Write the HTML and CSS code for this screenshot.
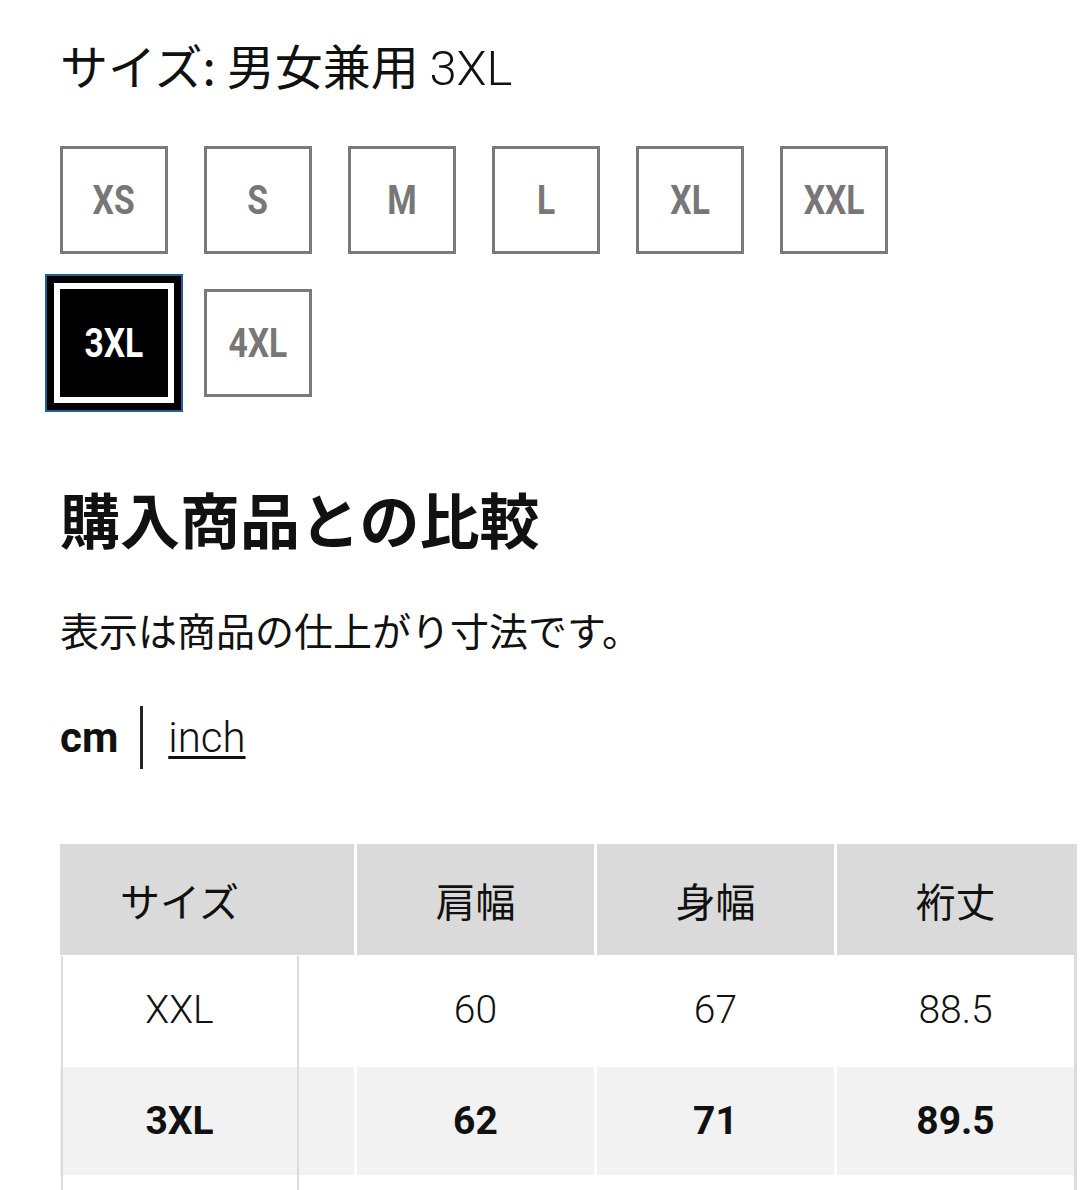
FILE: index.html
```html
<!DOCTYPE html>
<html lang="ja">
<head>
    <meta charset="UTF-8">
    <meta name="viewport" content="width=device-width, initial-scale=1.0">
    <title>サイズ選択</title>
    <link rel="stylesheet" href="styles.css">
</head>
<body>
    <main class="page">
        <h1 class="size-title">サイズ: 男女兼用 <span class="size-title-value">3XL</span></h1>

        <!-- サイズ選択ボタン -->
        <ul class="size-list">
            <li><button class="size-chip"><span>XS</span></button></li>
            <li><button class="size-chip"><span>S</span></button></li>
            <li><button class="size-chip"><span>M</span></button></li>
            <li><button class="size-chip"><span>L</span></button></li>
            <li><button class="size-chip"><span>XL</span></button></li>
            <li><button class="size-chip"><span>XXL</span></button></li>
            <li><button class="size-chip is-selected"><span>3XL</span></button></li>
            <li><button class="size-chip"><span>4XL</span></button></li>
        </ul>

        <h2 class="compare-title">購入商品との比較</h2>
        <p class="compare-note">表示は商品の仕上がり寸法です。</p>

        <div class="unit-switch">
            <span class="unit is-active">cm</span>
            <span class="unit-divider"></span>
            <a class="unit" href="#inch">inch</a>
        </div>

        <!-- 寸法表 -->
        <div class="size-table">
            <div class="table-row table-head">
                <div class="cell cell-lead"><span class="lead-text">サイズ</span></div>
                <div class="cell">肩幅</div>
                <div class="cell">身幅</div>
                <div class="cell">裄丈</div>
            </div>
            <div class="table-body">
                <div class="table-row">
                    <div class="cell cell-lead"><span class="lead-text">XXL</span></div>
                    <div class="cell">60</div>
                    <div class="cell">67</div>
                    <div class="cell">88.5</div>
                </div>
                <div class="table-row is-current">
                    <div class="cell cell-lead"><span class="lead-text">3XL</span></div>
                    <div class="cell">62</div>
                    <div class="cell">71</div>
                    <div class="cell">89.5</div>
                </div>
                <div class="table-row">
                    <div class="cell cell-lead"><span class="lead-text"></span></div>
                    <div class="cell"></div>
                    <div class="cell"></div>
                    <div class="cell"></div>
                </div>
            </div>
        </div>
    </main>
</body>
</html>
```

FILE: styles.css
```css
body {
    margin: 0;
    padding: 0;
    background: #fff;
    color: #111;
    font-family: "Noto Sans CJK JP", "Noto Sans", sans-serif;
    overflow: hidden;
}
.page {
    padding: 34px 0 0 60px;
}
.size-title {
    margin: 0;
    font-size: 48px;
    font-weight: 400;
    line-height: 60px;
    color: #111;
}
.size-title-value {
    font-family: Roboto, "Liberation Sans", sans-serif;
    font-weight: 300;
    font-size: 49px;
}
.size-list {
    list-style: none;
    margin: 47px 0 0 0;
    padding: 0;
    width: 830px;
    display: flex;
    flex-wrap: wrap;
    column-gap: 36px;
    row-gap: 35px;
}
.size-chip {
    width: 108px;
    height: 108px;
    margin: 0;
    padding: 0;
    border: 3px solid #7a7a7a;
    background: #fff;
    color: #777;
    font-family: Roboto, "Liberation Sans", sans-serif;
    font-size: 41px;
    font-weight: 700;
    display: flex;
    justify-content: center;
    align-items: center;
}
.size-chip span {
    display: inline-block;
    transform: scaleX(0.82);
}
.size-chip.is-selected {
    background: #000;
    border-color: #000;
    color: #fff;
    box-shadow: 0 0 0 6px #fff, 0 0 0 13px #000, 0 0 0 15px #1f5f9c;
}
.compare-title {
    margin: 83px 0 0 0;
    font-size: 60px;
    font-weight: 700;
    line-height: 76px;
}
.compare-note {
    margin: 45px 0 0 0;
    font-size: 39px;
    line-height: 56px;
}
.unit-switch {
    margin-top: 48px;
    display: flex;
    align-items: center;
    height: 64px;
    font-family: Roboto, "Liberation Sans", sans-serif;
    font-size: 42px;
}
.unit {
    color: #111;
}
.unit.is-active {
    font-weight: 700;
}
.unit-divider {
    width: 3px;
    height: 63px;
    background: #222;
    margin: 0 25px 0 22px;
}
a.unit {
    font-weight: 300;
    text-decoration: underline;
    text-decoration-thickness: 3px;
    text-underline-offset: 4px;
}
.size-table {
    margin-top: 75px;
    width: 1014px;
    border-right: 3px solid #dcdcdc;
}
.table-row {
    display: flex;
    column-gap: 3px;
    height: 108px;
}
.table-head {
    height: 111px;
    background: #fff;
}
.cell {
    width: 237px;
    display: flex;
    justify-content: center;
    align-items: center;
    font-family: Roboto, "Noto Sans CJK JP", sans-serif;
    font-size: 39px;
    font-weight: 300;
    color: #111;
}
.cell-lead {
    width: 294px;
    justify-content: flex-start;
}
.lead-text {
    width: 239px;
    text-align: center;
}
.table-head .cell {
    background: #dadada;
    font-family: "Noto Sans CJK JP", sans-serif;
    font-size: 40px;
    font-weight: 400;
}
.table-body {
    position: relative;
    margin-top: 1px;
    display: flex;
    flex-direction: column;
    row-gap: 3px;
}
/* 固定列の縦線 */
.table-body::before {
    content: "";
    position: absolute;
    top: 0;
    bottom: 0;
    left: 1px;
    width: 234px;
    border-left: 2px solid #dcdcdc;
    border-right: 2px solid #dcdcdc;
    pointer-events: none;
}
.is-current .cell {
    background: #f2f2f2;
    font-weight: 700;
}
```
